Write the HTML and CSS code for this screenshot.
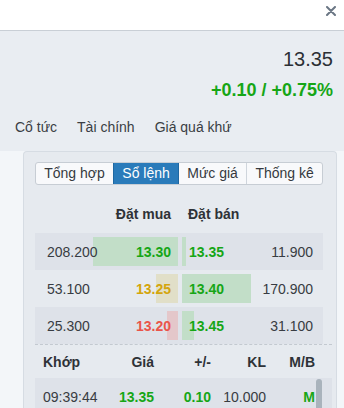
FILE: index.html
```html
<!DOCTYPE html>
<html lang="vi">
<head>
    <meta charset="UTF-8">
    <meta name="viewport" content="width=device-width, initial-scale=1.0">
    <title>Sổ lệnh</title>
    <link rel="stylesheet" href="styles.css">
</head>
<body>
    <div class="topbar">
        <svg class="close" width="10" height="10" viewBox="0 0 10 10">
            <path d="M1 1 L9 9 M9 1 L1 9" stroke="#6a7684" stroke-width="2" stroke-linecap="round"/>
        </svg>
    </div>

    <div class="header">
        <div class="price">13.35</div>
        <div class="change up">+0.10 / +0.75%</div>
        <div class="tabs">
            <span>Cổ tức</span>
            <span>Tài chính</span>
            <span>Giá quá khứ</span>
        </div>
    </div>

    <div class="content">
        <div class="panel">
            <div class="seg">
                <span>Tổng hợp</span>
                <span class="active">Sổ lệnh</span>
                <span>Mức giá</span>
                <span>Thống kê</span>
            </div>

            <div class="book-head">
                <div class="side bid"><b>Đặt mua</b></div>
                <div class="side ask"><b>Đặt bán</b></div>
            </div>

            <div class="book">
                <div class="book-row shaded">
                    <div class="side bid">
                        <span class="bar green" style="width: 85px"></span>
                        <span class="vol">208.200</span>
                        <b class="px up">13.30</b>
                    </div>
                    <div class="side ask">
                        <span class="bar green" style="width: 4px"></span>
                        <b class="px up">13.35</b>
                        <span class="vol">11.900</span>
                    </div>
                </div>
                <div class="book-row">
                    <div class="side bid">
                        <span class="bar yellow" style="width: 22px"></span>
                        <span class="vol">53.100</span>
                        <b class="px ref">13.25</b>
                    </div>
                    <div class="side ask">
                        <span class="bar green" style="width: 69px"></span>
                        <b class="px up">13.40</b>
                        <span class="vol">170.900</span>
                    </div>
                </div>
                <div class="book-row shaded">
                    <div class="side bid">
                        <span class="bar red" style="width: 11px"></span>
                        <span class="vol">25.300</span>
                        <b class="px down">13.20</b>
                    </div>
                    <div class="side ask">
                        <span class="bar green" style="width: 12px"></span>
                        <b class="px up">13.45</b>
                        <span class="vol">31.100</span>
                    </div>
                </div>
            </div>

            <div class="trades">
                <div class="trade-row trade-head">
                    <span class="left">Khớp</span>
                    <span>Giá</span>
                    <span>+/-</span>
                    <span>KL</span>
                    <span>M/B</span>
                </div>
                <div class="trade-list">
                    <div class="trade-row shaded">
                        <span class="left">09:39:44</span>
                        <b class="up">13.35</b>
                        <b class="up">0.10</b>
                        <span>10.000</span>
                        <b class="up">M</b>
                    </div>
                    <div class="thumb"></div>
                </div>
            </div>
        </div>
    </div>
</body>
</html>
```

FILE: styles.css
```css
html, body {
    height: 100%;
}
body {
    margin: 0;
    font-family: "Liberation Sans", Arial, sans-serif;
    font-size: 14px;
    color: #383c42;
    background-color: #f3f6f9;
    overflow: hidden;
}
b {
    font-weight: bold;
}
.up {
    color: #16a616;
}
.ref {
    color: #d4a50c;
}
.down {
    color: #ea5449;
}

/* top bar */
.topbar {
    height: 30px;
    background-color: #fff;
    border-bottom: 1px solid #c9cfd6;
    display: flex;
    justify-content: flex-end;
    align-items: flex-start;
    padding-right: 8px;
}
.close {
    margin-top: 6px;
}

/* quote header */
.header {
    background-color: #e9edf2;
    padding: 16px 11px 14px 15px;
}
.price {
    text-align: right;
    font-size: 20px;
    line-height: 24px;
    color: #2c3035;
}
.change {
    text-align: right;
    font-size: 18px;
    font-weight: bold;
    line-height: 22px;
    margin-top: 8px;
}
.tabs {
    display: flex;
    gap: 20px;
    margin-top: 16px;
    line-height: 20px;
    font-size: 14px;
    color: #3a3e44;
}

/* panel */
.content {
    padding: 0 7px 0 23px;
}
.panel {
    background-color: #e6eaef;
    border: 1px solid #d6dce3;
    border-bottom: none;
    border-radius: 4px 4px 0 0;
    padding: 10px 13px 0 11px;
    height: 256px;
    overflow: hidden;
}
.seg {
    display: flex;
    height: 23px;
    border: 1px solid #c7cdd4;
    border-radius: 3px;
    box-sizing: border-box;
    background-color: #f8f9fb;
    overflow: hidden;
}
.seg span {
    flex: 1 0 auto;
    text-align: center;
    white-space: nowrap;
    padding: 0 8px;
    line-height: 21px;
    color: #35393e;
    border-left: 1px solid #cfd5dc;
}
.seg span:first-child {
    border-left: none;
}
.seg span.active {
    background-color: #2a7bba;
    border-left-color: #1f68a2;
    color: #fff;
}
.seg span.active + span {
    border-left-color: #1f68a2;
}

/* order book */
.book-head {
    display: grid;
    grid-template-columns: 143px 141px;
    column-gap: 4px;
    padding: 20px 0 10px;
    line-height: 18px;
    color: #2e3237;
}
.book-head .bid {
    text-align: right;
    padding-right: 7px;
}
.book-head .ask {
    padding-left: 6px;
}
.book-row {
    display: grid;
    grid-template-columns: 143px 141px;
    column-gap: 4px;
    height: 37px;
    padding-right: 1px;
}
.shaded {
    background-color: #dee2e9;
}
.side {
    display: grid;
    align-items: center;
}
.book-row .side > * {
    grid-area: 1 / 1;
}
.bar {
    height: 29px;
}
.bid .bar {
    justify-self: end;
}
.ask .bar {
    justify-self: start;
}
.green {
    background-color: #c2dec8;
}
.yellow {
    background-color: #e1dfc8;
}
.red {
    background-color: #e4c7ca;
}
.px {
    font-size: 14px;
}
.bid .px {
    justify-self: end;
    padding-right: 7px;
}
.ask .px {
    justify-self: start;
    padding-left: 7px;
}
.bid .vol {
    justify-self: start;
    padding-left: 12px;
}
.ask .vol {
    justify-self: end;
    padding-right: 10px;
}

/* trades */
.trades {
    border-top: 1px dashed #c3c9d0;
    margin-right: -9px;
}
.trade-row {
    display: grid;
    grid-template-columns: 67px 44px 57px 55px 49px;
    padding-left: 8px;
    align-items: center;
    text-align: right;
}
.trade-row .left {
    text-align: left;
}
.trade-head {
    height: 33px;
    font-weight: bold;
    color: #2e3237;
}
.trade-list {
    position: relative;
}
.trade-list .trade-row {
    height: 37px;
}
.thumb {
    position: absolute;
    top: 1px;
    right: 10px;
    width: 6px;
    height: 60px;
    border-radius: 3px;
    background-color: #a9b3bc;
}
```
